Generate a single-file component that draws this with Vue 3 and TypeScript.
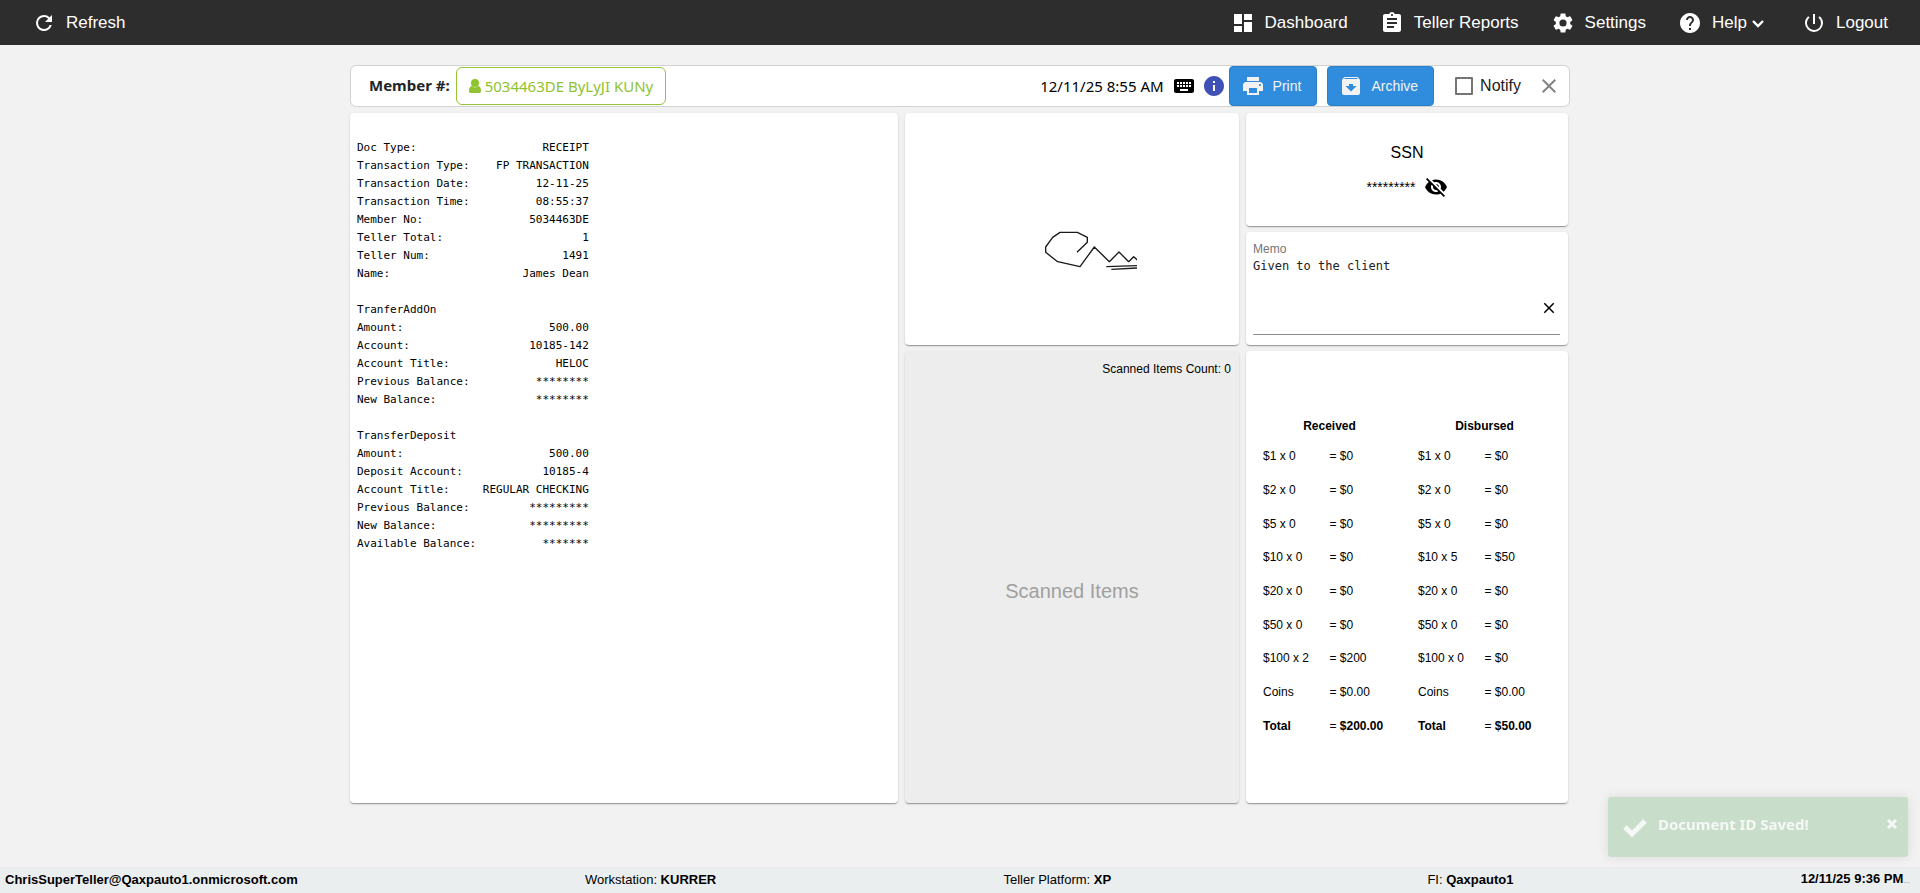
<script setup lang="ts">
import { ref } from 'vue'

type Entry = [label: string, value?: string]

const LINE_WIDTH = 35

const icons: Record<string, string> = {
  refresh: 'M17.65 6.35A7.958 7.958 0 0 0 12 4a8 8 0 1 0 7.73 10h-2.08A6 6 0 1 1 12 6c1.66 0 3.14.69 4.22 1.78L13 11h7V4l-2.35 2.35z',
  dashboard: 'M3 13h8V3H3v10zm0 8h8v-6H3v6zm10 0h8V11h-8v10zm0-18v6h8V3h-8z',
  reports: 'M19 3h-4.18C14.4 1.84 13.3 1 12 1s-2.4.84-2.82 2H5c-1.1 0-2 .9-2 2v14c0 1.1.9 2 2 2h14c1.1 0 2-.9 2-2V5c0-1.1-.9-2-2-2zm-7 0c.55 0 1 .45 1 1s-.45 1-1 1-1-.45-1-1 .45-1 1-1zm2 14H7v-2h7v2zm3-4H7v-2h10v2zm0-4H7V7h10v2z',
  settings: 'M19.14 12.94c.04-.3.06-.61.06-.94 0-.32-.02-.64-.07-.94l2.03-1.58a.49.49 0 0 0 .12-.61l-1.92-3.32a.49.49 0 0 0-.59-.22l-2.39.96c-.5-.38-1.03-.7-1.62-.94l-.36-2.54a.48.48 0 0 0-.48-.41h-3.84c-.24 0-.43.17-.47.41l-.36 2.54c-.59.24-1.13.57-1.62.94l-2.39-.96a.49.49 0 0 0-.59.22L2.74 8.87c-.12.21-.08.47.12.61l2.03 1.58c-.05.3-.09.63-.09.94s.02.64.07.94l-2.03 1.58a.49.49 0 0 0-.12.61l1.92 3.32c.12.22.37.29.59.22l2.39-.96c.5.38 1.03.7 1.62.94l.36 2.54c.05.24.24.41.48.41h3.84c.24 0 .44-.17.47-.41l.36-2.54c.59-.24 1.13-.56 1.62-.94l2.39.96c.22.08.47 0 .59-.22l1.92-3.32a.49.49 0 0 0-.12-.61l-2.01-1.58zM12 15.6A3.6 3.6 0 1 1 12 8.4a3.6 3.6 0 0 1 0 7.2z',
  help: 'M12 2C6.48 2 2 6.48 2 12s4.48 10 10 10 10-4.48 10-10S17.52 2 12 2zm1 17h-2v-2h2v2zm2.07-7.75l-.9.92C13.45 12.9 13 13.5 13 15h-2v-.5c0-1.1.45-2.1 1.17-2.83l1.24-1.26c.37-.36.59-.86.59-1.41 0-1.1-.9-2-2-2s-2 .9-2 2H8c0-2.21 1.79-4 4-4s4 1.79 4 4c0 .88-.36 1.68-.93 2.25z',
  power: 'M13 3h-2v10h2V3zm4.83 2.17l-1.42 1.42A6.92 6.92 0 0 1 19 12a7 7 0 1 1-11.42-5.42L6.17 5.17A8.93 8.93 0 0 0 3 12a9 9 0 0 0 18 0c0-2.74-1.23-5.18-3.17-6.83z',
  keyboard: 'M20 5H4c-1.1 0-1.99.9-1.99 2L2 17c0 1.1.9 2 2 2h16c1.1 0 2-.9 2-2V7c0-1.1-.9-2-2-2zm-9 3h2v2h-2V8zm0 3h2v2h-2v-2zM8 8h2v2H8V8zm0 3h2v2H8v-2zm-1 2H5v-2h2v2zm0-3H5V8h2v2zm9 7H8v-2h8v2zm0-4h-2v-2h2v2zm0-3h-2V8h2v2zm3 3h-2v-2h2v2zm0-3h-2V8h2v2z',
  info: 'M12 2C6.48 2 2 6.48 2 12s4.48 10 10 10 10-4.48 10-10S17.52 2 12 2zm1 15h-2v-6h2v6zm0-8h-2V7h2v2z',
  print: 'M19 8H5c-1.66 0-3 1.34-3 3v6h4v4h12v-4h4v-6c0-1.66-1.34-3-3-3zm-3 11H8v-5h8v5zm3-7c-.55 0-1-.45-1-1s.45-1 1-1 1 .45 1 1-.45 1-1 1zm-1-9H6v4h12V3z',
  archive: 'M20.54 5.23l-1.39-1.68A1.45 1.45 0 0 0 18 3H6c-.47 0-.88.21-1.16.55L3.46 5.23C3.17 5.57 3 6.02 3 6.5V19c0 1.1.9 2 2 2h14c1.1 0 2-.9 2-2V6.5c0-.48-.17-.93-.46-1.27zM12 17.5L6.500 12H10v-2h4v2h3.500L12 17.500zM5.120 5l.81-1h12l.94 1H5.120z',
  close: 'M19 6.410L17.590 5 12 10.590 6.410 5 5 6.410 10.590 12 5 17.590 6.410 19 12 13.410 17.590 19 19 17.590 13.410 12z',
  hidden: 'M12 7c2.760 0 5 2.240 5 5 0 .65-.13 1.260-.36 1.830l2.920 2.920c1.510-1.260 2.700-2.890 3.430-4.750-1.730-4.390-6-7.500-11-7.500-1.400 0-2.740.25-3.980.7l2.160 2.160C10.740 7.130 11.350 7 12 7zM2 4.270l2.280 2.280.46.46A11.804 11.804 0 0 0 1 12c1.730 4.390 6 7.500 11 7.500 1.550 0 3.030-.3 4.380-.84l.42.42L19.730 22 21 20.730 3.270 3 2 4.270zM7.530 9.800l1.550 1.550c-.05.21-.08.43-.08.65 0 1.660 1.340 3 3 3 .22 0 .44-.03.65-.08l1.550 1.550c-.67.33-1.410.53-2.200.53-2.760 0-5-2.240-5-5 0-.79.2-1.530.53-2.200zm4.310-.78l3.150 3.150.02-.16c0-1.660-1.340-3-3-3l-.17.01z',
}

const navItems = [
  { icon: 'dashboard', label: 'Dashboard' },
  { icon: 'reports', label: 'Teller Reports' },
  { icon: 'settings', label: 'Settings' },
  { icon: 'help', label: 'Help', menu: true },
  { icon: 'power', label: 'Logout' },
]

const receipt: Entry[] = [
  ['Doc Type:', 'RECEIPT'],
  ['Transaction Type:', 'FP TRANSACTION'],
  ['Transaction Date:', '12-11-25'],
  ['Transaction Time:', '08:55:37'],
  ['Member No:', '5034463DE'],
  ['Teller Total:', '1'],
  ['Teller Num:', '1491'],
  ['Name:', 'James Dean'],
  [''],
  ['TranferAddOn'],
  ['Amount:', '500.00'],
  ['Account:', '10185-142'],
  ['Account Title:', 'HELOC'],
  ['Previous Balance:', '********'],
  ['New Balance:', '********'],
  [''],
  ['TransferDeposit'],
  ['Amount:', '500.00'],
  ['Deposit Account:', '10185-4'],
  ['Account Title:', 'REGULAR CHECKING'],
  ['Previous Balance:', '*********'],
  ['New Balance:', '*********'],
  ['Available Balance:', '*******'],
]

const receiptText = receipt
  .map(([label, value]) => (value ? label + value.padStart(LINE_WIDTH - label.length) : label))
  .join('\n')

const cashRows = [
  ['$1 x 0', '$0', '$1 x 0', '$0'],
  ['$2 x 0', '$0', '$2 x 0', '$0'],
  ['$5 x 0', '$0', '$5 x 0', '$0'],
  ['$10 x 0', '$0', '$10 x 5', '$50'],
  ['$20 x 0', '$0', '$20 x 0', '$0'],
  ['$50 x 0', '$0', '$50 x 0', '$0'],
  ['$100 x 2', '$200', '$100 x 0', '$0'],
  ['Coins', '$0.00', 'Coins', '$0.00'],
]

const memo = ref('Given to the client')
const notify = ref(false)
const toastOpen = ref(true)
</script>

<template>
  <div class="page">
    <header class="topbar">
      <button class="nav-item" type="button">
        <svg class="icon" viewBox="0 0 24 24"><path :d="icons.refresh" /></svg>
        <span>Refresh</span>
      </button>
      <nav class="nav">
        <a v-for="item in navItems" :key="item.label" class="nav-item" href="#">
          <svg class="icon" viewBox="0 0 24 24"><path :d="icons[item.icon]" /></svg>
          <span>{{ item.label }}</span>
          <svg v-if="item.menu" class="chevron" viewBox="0 0 18 18"><path d="M4 7l5 5 5-5" /></svg>
        </a>
      </nav>
    </header>

    <main class="main">
      <section class="toolbar">
        <span class="member-label">Member #:</span>
        <button class="member" type="button">
          <svg class="person" viewBox="0 0 12 16">
            <circle cx="6" cy="5" r="4" />
            <path d="M3 8C1 8.300 0 10 0 13c0 1.500.8 2 2 2h8c1.200 0 2-.5 2-2 0-3-1-4.700-3-5-.8.9-1.800 1.400-3 1.400S3.800 8.900 3 8z" />
          </svg>
          <span>5034463DE ByLyJI KUNy</span>
        </button>
        <span class="date">12/11/25 8:55 AM</span>
        <button class="icon-button" type="button" aria-label="Keyboard">
          <svg class="icon" viewBox="0 0 24 24"><path :d="icons.keyboard" /></svg>
        </button>
        <button class="icon-button info" type="button" aria-label="Information">
          <svg class="icon" viewBox="0 0 24 24"><path :d="icons.info" /></svg>
        </button>
        <button class="action" type="button">
          <svg class="icon" viewBox="0 0 24 24"><path :d="icons.print" /></svg>
          <span>Print</span>
        </button>
        <button class="action archive" type="button">
          <svg class="icon" viewBox="0 0 24 24"><path :d="icons.archive" /></svg>
          <span>Archive</span>
        </button>
        <label class="notify">
          <input v-model="notify" type="checkbox" />
          <span>Notify</span>
        </label>
        <button class="icon-button dismiss" type="button" aria-label="Close">
          <svg class="icon" viewBox="0 0 24 24"><path :d="icons.close" /></svg>
        </button>
      </section>

      <div class="cards">
        <section class="card receipt">
          <pre>{{ receiptText }}</pre>
        </section>

        <section class="card signature">
          <svg viewBox="354 255 387 258" aria-label="Signature">
            <path d="M561 454L592 424V409L562 394H510L488 409L467 438V454L503 482L570 497L613 438L658 482L687 453L716 482L731 467L742 477" />
            <path d="M649 497L742 494M664 505L742 501" />
          </svg>
        </section>

        <section class="card scanned">
          <span class="scanned-count">Scanned Items Count: 0</span>
          <div class="scanned-empty">Scanned Items</div>
        </section>

        <section class="card ssn">
          <div class="ssn-title">SSN</div>
          <div class="ssn-value">
            <span>*********</span>
            <button class="icon-button" type="button" aria-label="Show SSN">
              <svg class="icon" viewBox="0 0 24 24"><path :d="icons.hidden" /></svg>
            </button>
          </div>
        </section>

        <section class="card memo">
          <label for="memo">Memo</label>
          <div class="memo-field">
            <textarea id="memo" v-model="memo" spellcheck="false"></textarea>
            <button class="icon-button clear" type="button" aria-label="Clear memo" @click="memo = ''">
              <svg class="icon" viewBox="0 0 24 24"><path :d="icons.close" /></svg>
            </button>
          </div>
        </section>

        <section class="card cash">
          <table>
            <thead>
              <tr>
                <th colspan="2">Received</th>
                <th colspan="2">Disbursed</th>
              </tr>
            </thead>
            <tbody>
              <tr v-for="row in cashRows" :key="row[0]">
                <td>{{ row[0] }}</td>
                <td>= {{ row[1] }}</td>
                <td>{{ row[2] }}</td>
                <td>= {{ row[3] }}</td>
              </tr>
              <tr>
                <td><b>Total</b></td>
                <td>= <b>$200.00</b></td>
                <td><b>Total</b></td>
                <td>= <b>$50.00</b></td>
              </tr>
            </tbody>
          </table>
        </section>
      </div>
    </main>

    <footer class="footer">
      <b>ChrisSuperTeller@Qaxpauto1.onmicrosoft.com</b>
      <span>Workstation: <b>KURRER</b></span>
      <span>Teller Platform: <b>XP</b></span>
      <span class="institution">FI: <b>Qaxpauto1</b></span>
      <span class="clock"><b>12/11/25 9:36 PM</b><span class="dots">...</span></span>
    </footer>

    <div v-if="toastOpen" class="toast" role="status">
      <svg class="check" viewBox="0 0 24 24"><path d="M2 12l7 7L22 6" /></svg>
      <span class="toast-text">Document ID Saved!</span>
      <button class="toast-close" type="button" aria-label="Dismiss" @click="toastOpen = false">
        <svg viewBox="0 0 12 12"><path d="M2 2l8 8M10 2l-8 8" /></svg>
      </button>
    </div>
  </div>
</template>

<style>
body {
  background: #f2f2f2;
}
</style>

<style scoped>
.page,
.page * {
  box-sizing: border-box;
}

.page {
  display: flex;
  flex-direction: column;
  min-height: 100vh;
  background: #f2f2f2;
  color: #000;
  font: 12px/18px "Liberation Sans", Arial, sans-serif;
}

button {
  padding: 0;
  border: 0;
  background: none;
  color: inherit;
  font: inherit;
  cursor: pointer;
}

svg {
  display: block;
  flex: none;
}

.icon {
  width: 24px;
  height: 24px;
  fill: currentColor;
}

.topbar {
  display: flex;
  align-items: center;
  justify-content: space-between;
  height: 45px;
  padding: 0 32px;
  background: #2d2d2d;
  color: #fff;
}

.nav {
  display: flex;
  gap: 32px;
}

.nav-item {
  display: flex;
  align-items: center;
  gap: 10px;
  color: #fff;
  font-size: 17px;
  line-height: 24px;
  text-decoration: none;
}

.chevron {
  width: 18px;
  height: 18px;
  margin: 0 3px 0 -8px;
  fill: none;
  stroke: currentColor;
  stroke-width: 2.4;
}

.main {
  display: flex;
  flex: 1;
  flex-direction: column;
  gap: 6px;
  width: 100%;
  max-width: 1220px;
  margin: 0 auto;
  padding: 20px 0;
}

.toolbar {
  display: flex;
  align-items: center;
  height: 42px;
  padding: 0 8px 0 18px;
  border: 1px solid #d2d2d2;
  border-radius: 6px;
  background: #fff;
  font-size: 16px;
}

.member-label {
  padding-bottom: 2px;
  color: #212529;
  font: bold 15px/20px "Noto Sans", "Open Sans", sans-serif;
}

.member {
  display: flex;
  align-items: center;
  gap: 4px;
  height: 38px;
  margin-left: 6px;
  padding: 0 12px;
  border: 1px solid #93c534;
  border-radius: 6px;
  color: #8fc32f;
  font: 15px/20px "Noto Sans", "Open Sans", sans-serif;
}

.person {
  width: 12px;
  height: 16px;
  fill: currentColor;
}

.date {
  margin-left: auto;
  margin-right: 8px;
  font: 15px/20px "Noto Sans", "Open Sans", sans-serif;
}

.info {
  margin: 0 3px 0 6px;
  color: #3f51b5;
}

.action {
  display: flex;
  align-items: center;
  gap: 8px;
  height: 40px;
  padding: 0 15px 0 11px;
  border: 1px solid #2a80c8;
  border-radius: 4px;
  background: #308ddd;
  color: #f2f2f2;
  font-size: 14px;
}

.archive {
  margin-left: 10px;
}

.notify {
  display: flex;
  align-items: center;
  gap: 7px;
  margin-left: 21px;
  color: #212121;
}

.notify input {
  width: 18px;
  height: 18px;
  margin: 0;
  border: 2px solid #757575;
  border-radius: 1px;
  background: #fff;
  appearance: none;
}

.notify input:checked {
  background: #308ddd;
}

.dismiss {
  margin-left: 16px;
  color: #848484;
}

.cards {
  display: grid;
  grid-template-areas:
    "receipt signature ssn"
    "receipt signature memo"
    "receipt scanned cash";
  grid-template-columns: 548fr 334fr 322fr;
  grid-template-rows: 113px 113px minmax(452px, auto);
  gap: 6px 7px;
  margin-right: 2px;
}

.card {
  border-radius: 4px;
  background: #fff;
  box-shadow:
    0 2px 1px -1px rgba(0, 0, 0, 0.2),
    0 1px 1px rgba(0, 0, 0, 0.14),
    0 1px 3px rgba(0, 0, 0, 0.12);
}

.receipt {
  grid-area: receipt;
  padding: 26px 7px;
}

.receipt pre {
  margin: 0;
  font: 11px/18px "DejaVu Sans Mono", monospace;
}

.signature {
  display: flex;
  grid-area: signature;
  align-items: center;
  justify-content: center;
}

.signature svg {
  width: 129px;
  height: 86px;
  fill: none;
  stroke: #1a1a1a;
  stroke-width: 4;
  stroke-linejoin: round;
}

.scanned {
  display: flex;
  flex-direction: column;
  grid-area: scanned;
  padding: 9px 8px 0;
  background: #ededed;
}

.scanned-count {
  align-self: flex-end;
}

.scanned-empty {
  display: flex;
  flex: 1;
  align-items: center;
  justify-content: center;
  color: #a0a0a0;
  font-size: 20px;
}

.ssn {
  display: flex;
  flex-direction: column;
  grid-area: ssn;
  align-items: center;
  justify-content: center;
  gap: 13px;
  padding-top: 4px;
}

.ssn-title {
  font-size: 16px;
}

.ssn-value {
  display: flex;
  align-items: center;
  gap: 8px;
  font-size: 14px;
}

.memo {
  display: flex;
  flex-direction: column;
  grid-area: memo;
  padding: 9px 8px 10px 7px;
}

.memo label {
  color: #757575;
  line-height: 16px;
}

.memo-field {
  display: flex;
  flex: 1;
  align-items: center;
  border-bottom: 1px solid #8e8e8e;
}

.memo textarea {
  flex: 1;
  align-self: stretch;
  min-width: 0;
  padding: 0;
  border: 0;
  outline: 0;
  background: none;
  color: #212121;
  font: 12px/18px "DejaVu Sans Mono", monospace;
  resize: none;
}

.clear {
  margin: 24px 2px 0 0;
}

.clear .icon {
  width: 18px;
  height: 18px;
}

.cash {
  display: flex;
  grid-area: cash;
  align-items: center;
  padding: 0 6px;
}

table {
  width: 100%;
  height: 331px;
  border-collapse: collapse;
  table-layout: fixed;
}

th,
td {
  padding: 0;
  text-align: left;
}

th {
  height: 28px;
  text-align: center;
}

td:nth-child(odd) {
  padding-left: 11px;
}

.footer {
  display: flex;
  align-items: center;
  justify-content: space-between;
  height: 26px;
  padding: 0 10px 0 5px;
  background: #ebeeef;
  font-size: 13px;
}

.institution {
  margin-left: 29px;
}

.dots {
  color: #8c8c8c;
  font-size: 8px;
}

.dots::first-letter {
  color: #000;
}

.toast {
  position: fixed;
  right: 12px;
  bottom: 36px;
  display: flex;
  align-items: center;
  width: 300px;
  height: 60px;
  padding: 0 10px 0 15px;
  border-radius: 3px;
  background: #c8deca;
  box-shadow: 0 0 12px rgba(0, 0, 0, 0.1);
  color: #f5f8f5;
}

.check {
  width: 24px;
  height: 24px;
  fill: none;
  stroke: currentColor;
  stroke-width: 5;
}

.toast-text {
  flex: 1;
  margin-left: 11px;
  padding-bottom: 6px;
  font: bold 15px/20px "Noto Sans", "Open Sans", sans-serif;
}

.toast-close {
  padding-bottom: 6px;
}

.toast-close svg {
  width: 12px;
  height: 12px;
  fill: none;
  stroke: currentColor;
  stroke-width: 3;
}
</style>
